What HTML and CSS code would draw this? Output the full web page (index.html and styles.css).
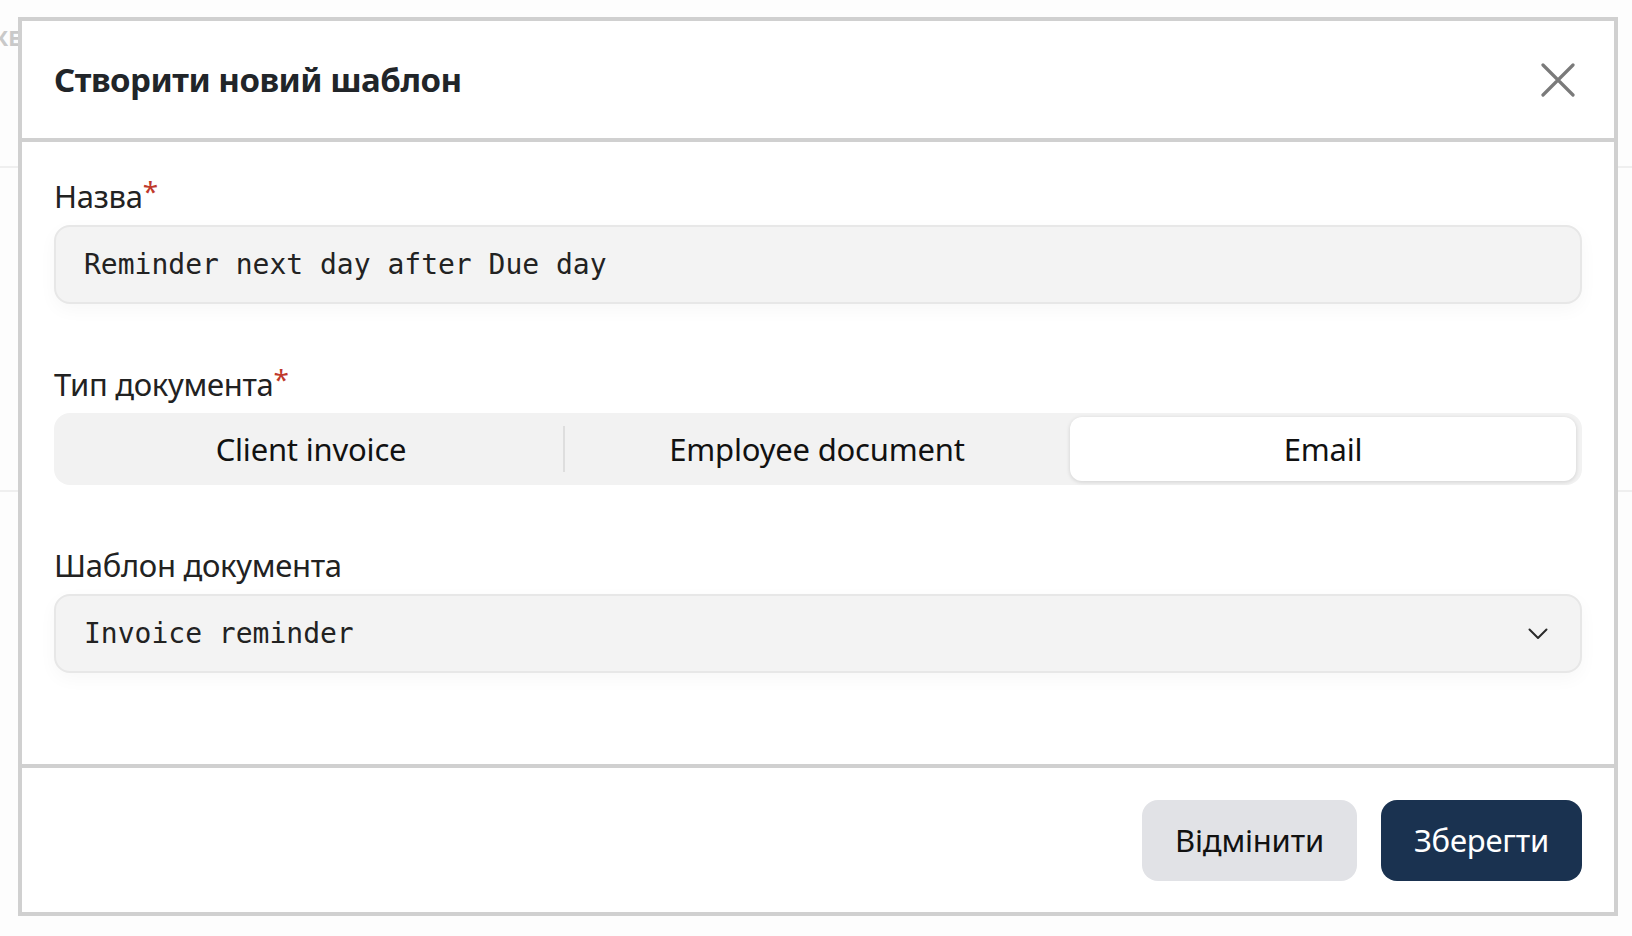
FILE: index.html
```html
<!DOCTYPE html>
<html lang="uk">
<head>
  <meta charset="UTF-8">
  <title>Створити новий шаблон</title>
  <link rel="stylesheet" href="styles.css">
</head>
<body>
  <div class="page">
    <div class="page-head"><span class="page-title">КЕ</span></div>
    <div class="page-row"></div>
  </div>

  <div class="modal">
    <div class="modal-header">
      <h2>Створити новий шаблон</h2>
      <button class="close" type="button" aria-label="Закрити">
        <svg width="34" height="34" viewBox="0 0 34 34">
          <path d="M2 2 L32 32 M32 2 L2 32" stroke="#7a7a7a" stroke-width="3.2" stroke-linecap="round" fill="none"/>
        </svg>
      </button>
    </div>

    <div class="modal-body">
      <div class="field">
        <label>Назва<span class="req">*</span></label>
        <input class="text-input" type="text" value="Reminder next day after Due day">
      </div>

      <div class="field">
        <label>Тип документа<span class="req">*</span></label>
        <div class="segmented">
          <div class="seg sep">Client invoice</div>
          <div class="seg">Employee document</div>
          <div class="seg active">Email</div>
        </div>
      </div>

      <div class="field">
        <label>Шаблон документа</label>
        <div class="select">
          <span>Invoice reminder</span>
          <svg width="20" height="12" viewBox="0 0 20 12">
            <path d="M1.5 1.5 L10 10 L18.5 1.5" stroke="#2a2a2a" stroke-width="2" fill="none" stroke-linecap="round" stroke-linejoin="round"/>
          </svg>
        </div>
      </div>
    </div>

    <div class="modal-footer">
      <button class="btn btn-cancel" type="button">Відмінити</button>
      <button class="btn btn-save" type="button">Зберегти</button>
    </div>
  </div>
</body>
</html>
```

FILE: styles.css
```css
body {
  margin: 0;
  font-family: 'Noto Sans', sans-serif;
  background-color: #fdfdfd;
  color: #222;
  height: 936px;
  overflow: hidden;
}
.page-head {
  height: 168px;
  padding-top: 22px;
  box-sizing: border-box;
  border-bottom: 2px solid #efefef;
}
.page-title {
  display: inline-block;
  margin-left: -7px;
  font-size: 22px;
  font-weight: 700;
  color: #c9c9c9;
}
.page-row {
  height: 322px;
  border-bottom: 2px solid #efefef;
}
.modal {
  position: absolute;
  top: 17px;
  left: 18px;
  width: 1600px;
  background: #fff;
  border: 4px solid #d0d0d0;
  box-sizing: border-box;
}
.modal-header {
  height: 117px;
  display: flex;
  align-items: center;
  justify-content: space-between;
  padding: 0 32px;
  border-bottom: 4px solid #d0d0d0;
}
.modal-header h2 {
  margin: 0;
  font-size: 33px;
  font-weight: 700;
  letter-spacing: -0.5px;
  color: #212529;
}
.close {
  width: 48px;
  height: 48px;
  padding: 0;
  border: none;
  background: none;
  display: flex;
  align-items: center;
  justify-content: center;
  cursor: pointer;
}
.modal-body {
  padding: 35px 32px 30px;
}
.field {
  margin-bottom: 61px;
}
.field label {
  display: block;
  font-size: 31px;
  line-height: 38px;
  letter-spacing: -0.3px;
  margin-bottom: 10px;
  color: #222;
}
.req {
  color: #c0392b;
  font-size: 28px;
  line-height: 0;
  vertical-align: 6px;
}
.text-input,
.select {
  width: 100%;
  height: 79px;
  box-sizing: border-box;
  padding: 0 32px 0 28px;
  border: 2px solid #e7e7e7;
  border-radius: 16px;
  background: #f3f3f3;
  font-family: 'DejaVu Sans Mono', monospace;
  font-size: 28px;
  color: #222;
  box-shadow: 0 6px 18px rgba(0, 0, 0, 0.035);
  outline: none;
}
.select {
  display: flex;
  align-items: center;
  justify-content: space-between;
}
.segmented {
  height: 72px;
  padding: 4px 6px 4px 4px;
  box-sizing: border-box;
  display: flex;
  background: #f2f2f2;
  border-radius: 16px;
}
.seg {
  flex: 1;
  position: relative;
  display: flex;
  align-items: center;
  justify-content: center;
  font-size: 31px;
  letter-spacing: -0.2px;
  color: #111;
  border-radius: 12px;
}
.seg.sep::after {
  content: "";
  position: absolute;
  right: -1px;
  top: 9px;
  bottom: 9px;
  width: 2px;
  background: #dedede;
}
.seg.active {
  background: #fff;
  box-shadow: 0 1px 4px rgba(0, 0, 0, 0.14);
}
.modal-footer {
  height: 144px;
  display: flex;
  align-items: center;
  justify-content: flex-end;
  gap: 24px;
  padding: 0 32px;
  border-top: 4px solid #d0d0d0;
}
.btn {
  height: 81px;
  padding: 0 33px;
  border: none;
  border-radius: 16px;
  font-family: 'Noto Sans', sans-serif;
  font-size: 31px;
  letter-spacing: -0.2px;
  cursor: pointer;
}
.btn-cancel {
  background: #e1e2e6;
  color: #111;
}
.btn-save {
  background: #1a3250;
  color: #fff;
}
```
